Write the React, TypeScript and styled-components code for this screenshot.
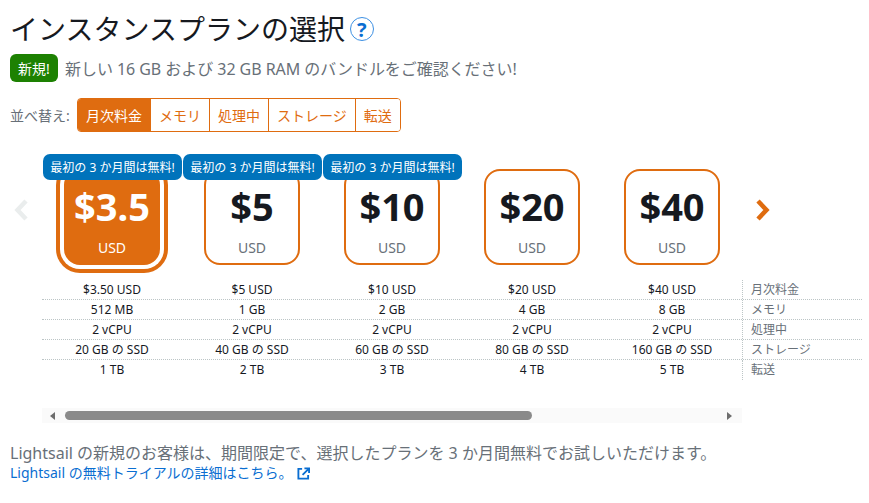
import styled, { createGlobalStyle } from 'styled-components';

const plans = [
    { price: '$3.5', monthly: '$3.50 USD', memory: '512 MB', cpu: '2 vCPU', storage: '20 GB の SSD', transfer: '1 TB', trial: true, selected: true },
    { price: '$5', monthly: '$5 USD', memory: '1 GB', cpu: '2 vCPU', storage: '40 GB の SSD', transfer: '2 TB', trial: true, selected: false },
    { price: '$10', monthly: '$10 USD', memory: '2 GB', cpu: '2 vCPU', storage: '60 GB の SSD', transfer: '3 TB', trial: true, selected: false },
    { price: '$20', monthly: '$20 USD', memory: '4 GB', cpu: '2 vCPU', storage: '80 GB の SSD', transfer: '4 TB', trial: false, selected: false },
    { price: '$40', monthly: '$40 USD', memory: '8 GB', cpu: '2 vCPU', storage: '160 GB の SSD', transfer: '5 TB', trial: false, selected: false },
];

const sortOptions = ['月次料金', 'メモリ', '処理中', 'ストレージ', '転送'];

const specRows = [
    { key: 'monthly', label: '月次料金' },
    { key: 'memory', label: 'メモリ' },
    { key: 'cpu', label: '処理中' },
    { key: 'storage', label: 'ストレージ' },
    { key: 'transfer', label: '転送' },
] as const;

const App = () => {
    return (
        <Page>
            <GlobalStyle />
            <TitleRow>
                <Title>インスタンスプランの選択</Title>
                <HelpIcon>?</HelpIcon>
            </TitleRow>
            <NoticeRow>
                <NewBadge>新規!</NewBadge>
                <NoticeText>新しい 16 GB および 32 GB RAM のバンドルをご確認ください!</NoticeText>
            </NoticeRow>
            <SortRow>
                <SortLabel>並べ替え:</SortLabel>
                <SortGroup>
                    {sortOptions.map((option, i) => (
                        <SortButton key={option} $active={i === 0}>
                            {option}
                        </SortButton>
                    ))}
                </SortGroup>
            </SortRow>
            <Carousel>
                <ArrowCell>
                    <svg width="14" height="22" viewBox="0 0 14 22">
                        <path d="M12 2 L3.5 11 L12 20" fill="none" stroke="#eaeded" strokeWidth="4.5" />
                    </svg>
                </ArrowCell>
                {plans.map(plan => (
                    <PlanCell key={plan.price}>
                        {plan.trial && <TrialRibbon>最初の 3 か月間は無料!</TrialRibbon>}
                        <PlanCard $selected={plan.selected}>
                            <Price $selected={plan.selected}>{plan.price}</Price>
                            <Currency $selected={plan.selected}>USD</Currency>
                        </PlanCard>
                    </PlanCell>
                ))}
                <ArrowCell>
                    <svg width="14" height="22" viewBox="0 0 14 22">
                        <path d="M2 2 L10.5 11 L2 20" fill="none" stroke="#df6c10" strokeWidth="4.5" />
                    </svg>
                </ArrowCell>
            </Carousel>
            <SpecTable>
                {specRows.map((row, i) => (
                    <SpecRow key={row.key} $last={i === specRows.length - 1}>
                        {plans.map(plan => (
                            <SpecValue key={plan.price}>{plan[row.key]}</SpecValue>
                        ))}
                        <SpecLabel>{row.label}</SpecLabel>
                    </SpecRow>
                ))}
            </SpecTable>
            <ScrollTrack>
                <ArrowLeft />
                <ScrollThumb />
                <ArrowRight />
            </ScrollTrack>
            <TrialText>Lightsail の新規のお客様は、期間限定で、選択したプランを 3 か月間無料でお試しいただけます。</TrialText>
            <TrialLink>
                Lightsail の無料トライアルの詳細はこちら。
                <svg width="13" height="13" viewBox="0 0 14 14">
                    <path d="M5.5 2 H1.5 V12.5 H12 V8.5" fill="none" stroke="#0a6ed1" strokeWidth="2" />
                    <path d="M8 1.5 H13 V6.5 M12.5 2 L6 8.5" fill="none" stroke="#0a6ed1" strokeWidth="2" />
                </svg>
            </TrialLink>
        </Page>
    );
};

export default App;

const GlobalStyle = createGlobalStyle`
    body {
        margin: 0;
        background: #fff;
        font-family: "Noto Sans", "Noto Sans CJK JP", sans-serif;
    }
`;

const Page = styled.div`
    width: 869px;
    height: 503px;
    padding: 12px 0 0 10px;
    box-sizing: border-box;
    overflow: hidden;
`;

const TitleRow = styled.div`
    display: flex;
    align-items: center;
    height: 34px;
    gap: 5px;
`;

const Title = styled.h1`
    margin: 0;
    font-size: 28px;
    font-weight: 400;
    line-height: 34px;
    color: #16191f;
`;

const HelpIcon = styled.span`
    width: 24px;
    height: 24px;
    box-sizing: border-box;
    border: 1.5px solid #3d90e3;
    border-radius: 50%;
    display: flex;
    align-items: center;
    justify-content: center;
    font-size: 20px;
    font-weight: 700;
    color: #0a6ed1;
`;

const NoticeRow = styled.div`
    display: flex;
    align-items: center;
    margin-top: 8px;
    gap: 7px;
`;

const NewBadge = styled.span`
    width: 48px;
    height: 28px;
    border-radius: 6px;
    background: #1d8102;
    color: #fff;
    font-size: 14px;
    display: flex;
    align-items: center;
    justify-content: center;
`;

const NoticeText = styled.span`
    font-size: 16px;
    color: #687078;
    letter-spacing: -0.05px;
`;

const SortRow = styled.div`
    display: flex;
    align-items: center;
    margin-top: 16px;
    gap: 8px;
`;

const SortLabel = styled.span`
    font-size: 14px;
    color: #687078;
    width: 59px;
    white-space: nowrap;
`;

const SortGroup = styled.div`
    display: flex;
    height: 34px;
    box-sizing: border-box;
    border: 1px solid #df6c10;
    border-radius: 4px;
    overflow: hidden;
`;

const SortButton = styled.div<{ $active: boolean }>`
    display: flex;
    align-items: center;
    padding: 0 8px;
    font-size: 14px;
    color: ${p => (p.$active ? '#fff' : '#df6c10')};
    background: ${p => (p.$active ? '#df6c10' : '#fff')};
    & + & {
        border-left: 1px solid #df6c10;
    }
`;

const Carousel = styled.div`
    display: flex;
    width: 784px;
    margin: 0 0 0 -10px;
    height: 134px;
`;

const ArrowCell = styled.div`
    width: 42px;
    display: flex;
    align-items: center;
    justify-content: center;
    padding-top: 22px;
    box-sizing: border-box;
`;

const PlanCell = styled.div`
    position: relative;
    width: 140px;
    height: 134px;
    display: flex;
    justify-content: center;
    padding-top: 37px;
    box-sizing: border-box;
`;

const TrialRibbon = styled.div`
    position: absolute;
    z-index: 1;
    top: 22px;
    left: 1px;
    width: 139px;
    height: 26px;
    border-radius: 7px;
    background: #0073bb;
    color: #fff;
    font-size: 12px;
    display: flex;
    align-items: center;
    justify-content: center;
    white-space: nowrap;
`;

const PlanCard = styled.div<{ $selected: boolean }>`
    width: 96px;
    height: 96px;
    box-sizing: border-box;
    border: 2px solid #df6c10;
    border-radius: 16px;
    background: ${p => (p.$selected ? '#df6c10' : '#fff')};
    box-shadow: ${p => (p.$selected ? '0 0 0 4px #fff, 0 0 0 8px #df6c10' : 'none')};
    display: flex;
    flex-direction: column;
    align-items: center;
`;

const Price = styled.div<{ $selected: boolean }>`
    margin-top: 9px;
    font-size: 38px;
    line-height: 52px;
    font-weight: 700;
    color: ${p => (p.$selected ? '#fff' : '#16191f')};
`;

const Currency = styled.div<{ $selected: boolean }>`
    margin-top: 7px;
    font-size: 14px;
    line-height: 18px;
    color: ${p => (p.$selected ? '#fff' : '#687078')};
`;

const SpecTable = styled.div`
    width: 820px;
    margin: 14px 0 0 32px;
`;

const SpecRow = styled.div<{ $last: boolean }>`
    display: grid;
    grid-template-columns: repeat(5, 140px) 120px;
    height: 20px;
    box-sizing: border-box;
    border-bottom: ${p => (p.$last ? 'none' : '1px dotted #bcc5c6')};
`;

const SpecValue = styled.div`
    font-size: 12px;
    line-height: 19px;
    text-align: center;
    color: #16191f;
`;

const SpecLabel = styled.div`
    font-size: 12px;
    line-height: 19px;
    color: #687078;
    padding-left: 8px;
    border-left: 1px dotted #bcc5c6;
    white-space: nowrap;
`;

const ScrollTrack = styled.div`
    width: 700px;
    height: 15px;
    margin: 28px 0 0 32px;
    background: #fafafa;
    display: flex;
    align-items: center;
`;

const ArrowLeft = styled.span`
    margin-left: 8px;
    border-style: solid;
    border-width: 4px 5px 4px 0;
    border-color: transparent #6d6d6d transparent transparent;
`;

const ArrowRight = styled.span`
    margin-left: 195px;
    border-style: solid;
    border-width: 4px 0 4px 5px;
    border-color: transparent transparent transparent #6d6d6d;
`;

const ScrollThumb = styled.div`
    margin-left: 10px;
    width: 467px;
    height: 9px;
    border-radius: 5px;
    background: #8a8a8a;
`;

const TrialText = styled.p`
    margin: 20px 0 0;
    font-size: 16px;
    line-height: 20px;
    color: #687078;
`;

const TrialLink = styled.a`
    display: flex;
    align-items: center;
    gap: 4px;
    font-size: 14px;
    line-height: 20px;
    color: #0a6ed1;
`;
